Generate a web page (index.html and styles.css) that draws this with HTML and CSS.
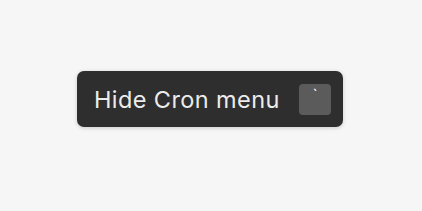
FILE: index.html
```html
<!DOCTYPE html>
<html lang="en">
<head>
    <meta charset="UTF-8">
    <title>Cron tooltip</title>
    <link rel="stylesheet" href="styles.css">
</head>
<body>
    <div class="stage">
        <div class="tooltip">
            <span class="label">Hide Cron menu</span>
            <span class="key">`</span>
        </div>
    </div>
</body>
</html>
```

FILE: styles.css
```css
body {
    margin: 0;
    background: #f6f6f6;
    font-family: Inter, "Noto Sans", sans-serif;
}
.stage {
    height: 211px;
    padding: 71px 0 0 77px;
    box-sizing: border-box;
}
.tooltip {
    display: inline-flex;
    align-items: center;
    gap: 17px;
    width: 266px;
    height: 56px;
    box-sizing: border-box;
    padding: 0 12px 0 17px;
    background: #2e2e2e;
    border-radius: 7px;
    box-shadow: 0 1px 4px rgba(0, 0, 0, 0.18);
}
.label {
    flex: 1;
    color: #ececec;
    font-size: 23.5px;
    letter-spacing: 0.4px;
}
.key {
    width: 32px;
    height: 31px;
    border-radius: 4px;
    background: #5b5b5b;
    color: #f0f0f0;
    font-size: 16px;
    text-align: center;
    line-height: 22px;
}
```
